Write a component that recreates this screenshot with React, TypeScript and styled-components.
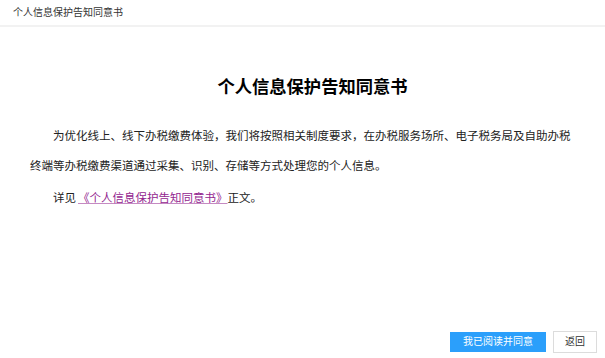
import styled, { createGlobalStyle } from 'styled-components'

const GlobalStyle = createGlobalStyle`
    html, body {
        margin: 0;
        padding: 0;
        background: #fff;
    }
    body {
        font-family: "Liberation Sans", "Noto Sans CJK SC", sans-serif;
        color: #333;
    }
`

const App = () => {
    return (
        <Page>
            <GlobalStyle />
            <Header>个人信息保护告知同意书</Header>
            <Content>
                <Title>个人信息保护告知同意书</Title>
                <Paragraph>
                    为优化线上、线下办税缴费体验，我们将按照相关制度要求，在办税服务场所、电子税务局及自助办税终端等办税缴费渠道通过采集、识别、存储等方式处理您的个人信息。
                </Paragraph>
                <Paragraph $gap={2}>
                    详见<DocLink href='#'>《个人信息保护告知同意书》</DocLink>正文。
                </Paragraph>
            </Content>
            <Footer>
                <Button $primary>我已阅读并同意</Button>
                <Button>返回</Button>
            </Footer>
        </Page>
    )
}

export default App

const Page = styled.div`
    height: 100vh;
    display: flex;
    flex-direction: column;
    box-sizing: border-box;
`

const Header = styled.div`
    height: 25px;
    line-height: 26px;
    padding-left: 13px;
    font-size: 10px;
    color: #333;
    border-bottom: 2px solid #f2f2f2;
    flex-shrink: 0;
`

const Content = styled.div`
    flex: 1;
    padding: 0 30px;
`

const Title = styled.h1`
    margin: 48px 0 22px;
    padding-left: 20px;
    text-align: center;
    font-size: 17.3px;
    line-height: 24px;
    font-weight: 700;
    color: #000;
`

const Paragraph = styled.p<{ $gap?: number }>`
    margin: ${p => p.$gap || 0}px 0 0;
    text-indent: 2em;
    font-size: 11.5px;
    line-height: 30px;
    color: #222;
`

const DocLink = styled.a`
    color: #93268f;
    text-decoration: underline;
    text-decoration-color: #c58ac2;
    margin-left: 2px;
`

const Footer = styled.div`
    display: flex;
    justify-content: flex-end;
    align-items: center;
    gap: 7px;
    padding: 0 8px 5px 0;
`

const Button = styled.button<{ $primary?: boolean }>`
    height: ${p => (p.$primary ? '20px' : '22px')};
    padding: 0 ${p => (p.$primary ? '12px' : '11px')};
    border: 1px solid ${p => (p.$primary ? '#2b9ffb' : '#dcdcdc')};
    background: ${p => (p.$primary ? '#2b9ffb' : '#fff')};
    color: ${p => (p.$primary ? '#fff' : '#333')};
    font-family: inherit;
    font-size: 10px;
    line-height: 1;
    border-radius: 0;
    cursor: pointer;
`
